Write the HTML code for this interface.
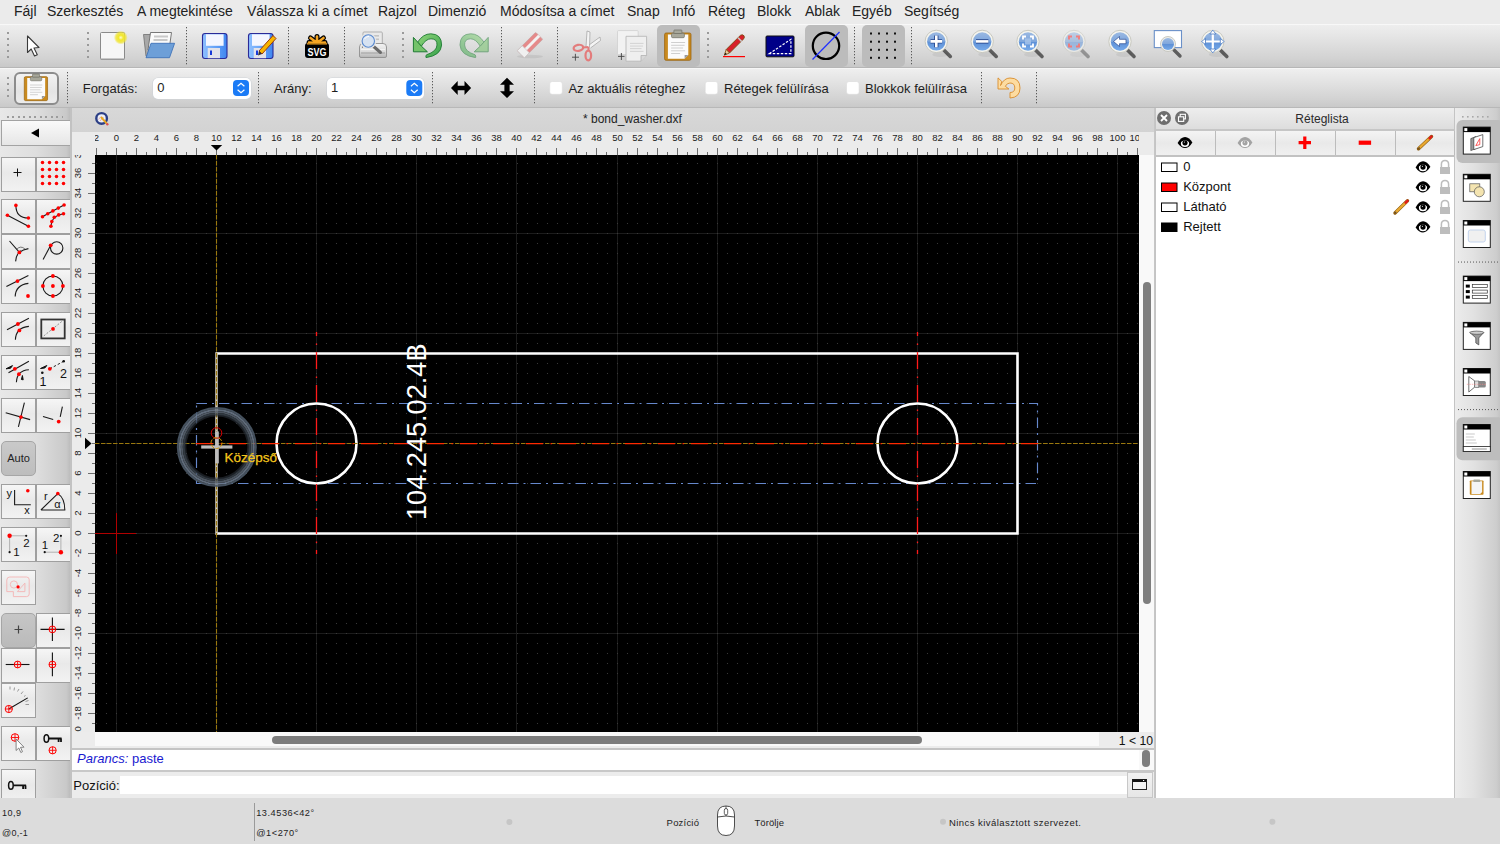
<!DOCTYPE html><html><head><meta charset="utf-8"><style>
*{margin:0;padding:0;box-sizing:border-box}
html,body{width:1500px;height:844px;overflow:hidden;background:#ececec;font-family:"Liberation Sans",sans-serif;color:#1a1a1a}
.a{position:absolute}
.sep{position:absolute;width:1px;border-left:1px dotted #8a8a8a}
.btn{position:absolute;border:1px solid #9a9a9a;background:linear-gradient(#f7f7f7,#e4e4e4)}
.t{position:absolute;white-space:nowrap}
</style></head><body>

<div class="a" style="left:0;top:0;width:1500px;height:24px;background:#ebebeb"></div>
<div class="t" style="left:14px;top:3px;font-size:14px;line-height:17px;color:#222">Fájl</div>
<div class="t" style="left:47px;top:3px;font-size:14px;line-height:17px;color:#222">Szerkesztés</div>
<div class="t" style="left:137px;top:3px;font-size:14px;line-height:17px;color:#222">A megtekintése</div>
<div class="t" style="left:247px;top:3px;font-size:14px;line-height:17px;color:#222">Válassza ki a címet</div>
<div class="t" style="left:378px;top:3px;font-size:14px;line-height:17px;color:#222">Rajzol</div>
<div class="t" style="left:428px;top:3px;font-size:14px;line-height:17px;color:#222">Dimenzió</div>
<div class="t" style="left:500px;top:3px;font-size:14px;line-height:17px;color:#222">Módosítsa a címet</div>
<div class="t" style="left:627px;top:3px;font-size:14px;line-height:17px;color:#222">Snap</div>
<div class="t" style="left:672px;top:3px;font-size:14px;line-height:17px;color:#222">Infó</div>
<div class="t" style="left:708px;top:3px;font-size:14px;line-height:17px;color:#222">Réteg</div>
<div class="t" style="left:757px;top:3px;font-size:14px;line-height:17px;color:#222">Blokk</div>
<div class="t" style="left:805px;top:3px;font-size:14px;line-height:17px;color:#222">Ablak</div>
<div class="t" style="left:852px;top:3px;font-size:14px;line-height:17px;color:#222">Egyéb</div>
<div class="t" style="left:904px;top:3px;font-size:14px;line-height:17px;color:#222">Segítség</div>
<div class="a" style="left:0;top:24px;width:1500px;height:44px;background:linear-gradient(#eeeeee,#e6e6e6 25%,#d2d2d2 80%,#c8c8c8);border-top:1px solid #f8f8f8;border-bottom:1px solid #b6b6b6"></div>
<div class="a" style="left:0;top:68px;width:1500px;height:40px;background:linear-gradient(#efefef,#e6e6e6 25%,#d2d2d2 80%,#c9c9c9);border-top:1px solid #f6f6f6;border-bottom:1px solid #b8b8b8"></div>
<svg class="a" style="left:0;top:0" width="1500" height="108" viewBox="0 0 1500 108">
<defs><pattern id="vdots" x="0" y="0" width="1" height="3" patternUnits="userSpaceOnUse"><rect width="1" height="1.3" fill="#5a5a5a"/></pattern><linearGradient id="blueg" x1="0" y1="0" x2="0" y2="1"><stop offset="0" stop-color="#9bb9e2"/><stop offset="0.5" stop-color="#7ea6dc"/><stop offset="0.52" stop-color="#5e90d6"/><stop offset="1" stop-color="#76aaea"/></linearGradient><linearGradient id="floppy" x1="0" y1="0" x2="1" y2="0"><stop offset="0" stop-color="#8ec0ff"/><stop offset="1" stop-color="#3f86f0"/></linearGradient><radialGradient id="glow"><stop offset="0" stop-color="#fffbd0"/><stop offset="0.35" stop-color="#f2e82a"/><stop offset="0.7" stop-color="#f0e430" stop-opacity="0.8"/><stop offset="1" stop-color="#f0e430" stop-opacity="0"/></radialGradient><linearGradient id="greeng" x1="0" y1="0" x2="1" y2="1"><stop offset="0" stop-color="#8fd47a"/><stop offset="1" stop-color="#36a24a"/></linearGradient></defs>
<rect x="186" y="26" width="1" height="40" fill="url(#vdots)"/>
<rect x="288" y="26" width="1" height="40" fill="url(#vdots)"/>
<rect x="344" y="26" width="1" height="40" fill="url(#vdots)"/>
<rect x="501" y="26" width="1" height="40" fill="url(#vdots)"/>
<rect x="557" y="26" width="1" height="40" fill="url(#vdots)"/>
<rect x="854" y="26" width="1" height="40" fill="url(#vdots)"/>
<rect x="911" y="26" width="1" height="40" fill="url(#vdots)"/>
<rect x="7" y="32" width="2" height="2" fill="#9a9a9a"/><rect x="7" y="38" width="2" height="2" fill="#9a9a9a"/><rect x="7" y="44" width="2" height="2" fill="#9a9a9a"/><rect x="7" y="50" width="2" height="2" fill="#9a9a9a"/><rect x="7" y="56" width="2" height="2" fill="#9a9a9a"/>
<rect x="87" y="32" width="2" height="2" fill="#9a9a9a"/><rect x="87" y="38" width="2" height="2" fill="#9a9a9a"/><rect x="87" y="44" width="2" height="2" fill="#9a9a9a"/><rect x="87" y="50" width="2" height="2" fill="#9a9a9a"/><rect x="87" y="56" width="2" height="2" fill="#9a9a9a"/>
<rect x="402" y="32" width="2" height="2" fill="#9a9a9a"/><rect x="402" y="38" width="2" height="2" fill="#9a9a9a"/><rect x="402" y="44" width="2" height="2" fill="#9a9a9a"/><rect x="402" y="50" width="2" height="2" fill="#9a9a9a"/><rect x="402" y="56" width="2" height="2" fill="#9a9a9a"/>
<rect x="707" y="32" width="2" height="2" fill="#9a9a9a"/><rect x="707" y="38" width="2" height="2" fill="#9a9a9a"/><rect x="707" y="44" width="2" height="2" fill="#9a9a9a"/><rect x="707" y="50" width="2" height="2" fill="#9a9a9a"/><rect x="707" y="56" width="2" height="2" fill="#9a9a9a"/>
<rect x="67" y="71" width="1" height="34" fill="url(#vdots)"/>
<rect x="258" y="71" width="1" height="34" fill="url(#vdots)"/>
<rect x="432" y="71" width="1" height="34" fill="url(#vdots)"/>
<rect x="534" y="71" width="1" height="34" fill="url(#vdots)"/>
<rect x="981" y="71" width="1" height="34" fill="url(#vdots)"/>
<rect x="1036" y="71" width="1" height="34" fill="url(#vdots)"/>
<rect x="7" y="77" width="2" height="2" fill="#9a9a9a"/><rect x="7" y="83" width="2" height="2" fill="#9a9a9a"/><rect x="7" y="89" width="2" height="2" fill="#9a9a9a"/><rect x="7" y="95" width="2" height="2" fill="#9a9a9a"/>
<rect x="657" y="25" width="43" height="42" rx="5" fill="#bcbcbc"/>
<rect x="805" y="25" width="43" height="42" rx="5" fill="#bcbcbc"/>
<rect x="862" y="25" width="43" height="42" rx="5" fill="#bcbcbc"/>
<path d="M27.5 36L27.5 52.5L31.2 49L34.5 56L37.3 54.7L34 48L39 47.5Z" fill="#fff" stroke="#3a3a3a" stroke-width="1.1" stroke-linejoin="round"/>
<rect x="100.5" y="32.5" width="24" height="27" rx="1" fill="#f6f6f6" stroke="#8a8a8a" stroke-width="1"/>
<rect x="101" y="58.5" width="23" height="1.5" fill="#9a9a9a"/>
<circle cx="120.8" cy="37.6" r="7" fill="url(#glow)"/>
<path d="M143.5 34.5H151L150 56H146Z" fill="#a8a8a8" stroke="#6e6e6e" stroke-width="0.8"/>
<path d="M150.5 32.5H171.5L169 50H148Z" fill="#fafafa" stroke="#6a6a6a" stroke-width="0.9"/>
<rect x="154" y="35.5" width="14" height="2" fill="#c8c8c8"/><rect x="153.5" y="39" width="14" height="2" fill="#c8c8c8"/>
<path d="M151 43.3H174.6L169.5 57.7H146Z" fill="#6d9fd8" stroke="#3f73b8" stroke-width="0.9" stroke-linejoin="round"/>
<rect x="202.5" y="33.5" width="24.5" height="25" rx="2.5" fill="url(#floppy)" stroke="#2a2a98" stroke-width="1.1"/><rect x="206" y="34.3" width="17.6" height="11.5" fill="#f4f6ff"/><rect x="207.7" y="48" width="12.3" height="10.2" fill="#e2e2ea"/><rect x="210" y="50.5" width="2" height="4.5" fill="#1a3ad8"/>
<rect x="248.5" y="33.5" width="24.5" height="25" rx="2.5" fill="url(#floppy)" stroke="#2a2a98" stroke-width="1.1"/><rect x="252" y="34.3" width="17.6" height="11.5" fill="#f4f6ff"/><rect x="253.7" y="48" width="12.3" height="10.2" fill="#e2e2ea"/><rect x="256" y="50.5" width="2" height="4.5" fill="#1a3ad8"/>
<path d="M259 51L273 35.5L276 38.5L262 54Z" fill="#f7b500" stroke="#9a3a10" stroke-width="1"/>
<path d="M259 51L262 54L258 55.5Z" fill="#333"/>
<path d="M317 36.5L317 43M317 43L310.5 38M317 43L323.5 38M317 43L309 42.5M317 43L325 42.5" stroke="#000" stroke-width="5" stroke-linecap="round"/>
<path d="M317 36.5L317 43M317 43L310.5 38M317 43L323.5 38M317 43L309 42.5M317 43L325 42.5" stroke="#f6a623" stroke-width="2.6" stroke-linecap="round"/>
<rect x="305" y="43" width="24" height="15" rx="3" fill="#000"/>
<rect x="307" y="43.2" width="20" height="1.3" fill="#f6a623"/>
<text x="317" y="56" text-anchor="middle" font-family="Liberation Sans" font-weight="bold" font-size="11" fill="#fff" textLength="19" lengthAdjust="spacingAndGlyphs">SVG</text>
<defs><linearGradient id="prg" x1="0" y1="0" x2="0" y2="1"><stop offset="0" stop-color="#f4f4f4"/><stop offset="0.55" stop-color="#dcdcdc"/><stop offset="1" stop-color="#b4b4b4"/></linearGradient></defs>
<rect x="363" y="32" width="19.3" height="15" rx="1" fill="#e9e9e9" stroke="#a8a8a8" stroke-width="0.9"/>
<rect x="366" y="35" width="13" height="1.6" fill="#c4c4c4"/><rect x="366" y="38.5" width="13" height="1.6" fill="#c4c4c4"/>
<path d="M359.5 47Q359.5 43.5 363 43.5H383Q386.5 43.5 386.5 47V56Q386.5 57.5 385 57.5H361Q359.5 57.5 359.5 56Z" fill="url(#prg)" stroke="#8e8e8e" stroke-width="0.9"/>
<path d="M361 49.5H385" stroke="#f8f8f8" stroke-width="0.8"/><rect x="361" y="52.5" width="24" height="1" fill="#a0a0a0"/>
<circle cx="362.5" cy="47" r="0.7" fill="#555"/>
<path d="M372.5 45.5L380.5 52.5" stroke="#6a6a6a" stroke-width="3" stroke-linecap="round"/>
<circle cx="368.3" cy="41" r="7.2" fill="none" stroke="#e6e6e6" stroke-width="1.6"/>
<circle cx="368.3" cy="41" r="6.2" fill="#d6e2f2" stroke="#5a8ad0" stroke-width="1.1"/>
<path d="M364.5 39Q366 36.5 369 36.3" stroke="#fff" stroke-width="1" fill="none"/>
<g transform="" opacity="1"><path d="M417.6 42.2Q423 33.8 430.8 33.8Q441.6 34 441.6 45Q441 55.5 426 57.6Q425.5 55.8 426.5 54.8Q436.8 51.5 437 45Q437.3 38.8 431 38.8Q425.8 38.8 421.2 46.4Z" fill="url(#greeng)" stroke="#1f7a34" stroke-width="0.9" stroke-linejoin="round"/><path d="M413.4 37.4V51.8H427.4L421.5 46.3Z" fill="#74c36a" stroke="#1f7a34" stroke-width="1" stroke-linejoin="round"/></g>
<g transform="translate(901.6 0) scale(-1 1)" opacity="0.55"><path d="M417.6 42.2Q423 33.8 430.8 33.8Q441.6 34 441.6 45Q441 55.5 426 57.6Q425.5 55.8 426.5 54.8Q436.8 51.5 437 45Q437.3 38.8 431 38.8Q425.8 38.8 421.2 46.4Z" fill="url(#greeng)" stroke="#1f7a34" stroke-width="0.9" stroke-linejoin="round"/><path d="M413.4 37.4V51.8H427.4L421.5 46.3Z" fill="#74c36a" stroke="#1f7a34" stroke-width="1" stroke-linejoin="round"/></g>
<ellipse cx="530" cy="56.5" rx="13" ry="1.8" fill="#000" opacity="0.07"/>
<g transform="rotate(-45 530 45)"><rect x="517" y="40" width="26" height="10" rx="1" fill="#e58a8a" stroke="#c9a0a0" stroke-width="0.7"/><rect x="517" y="43.5" width="26" height="3" fill="#f2f2f2"/><rect x="517" y="40" width="7" height="10" fill="#f0f0f0" stroke="#c8c8c8" stroke-width="0.7"/></g>
<path d="M586 47L587 31L590 32L589.5 47M589 45L600 37L600.5 40.5L590.5 48" fill="#f4f4f4" stroke="#a8a8a8" stroke-width="0.8"/>
<ellipse cx="578.4" cy="47.9" rx="4.8" ry="3" fill="none" stroke="#e37c7c" stroke-width="2.2" transform="rotate(-10 578.4 47.9)"/>
<ellipse cx="588.3" cy="55.5" rx="2.8" ry="4.8" fill="none" stroke="#e37c7c" stroke-width="2.2"/>
<path d="M583 47.5L588.5 47M588.5 47L588.5 50.7" stroke="#e37c7c" stroke-width="2"/>
<path d="M572 57.2H579M575.4 53.8V60.7" stroke="#444" stroke-width="0.9"/>
<rect x="617.5" y="30.6" width="20.7" height="24" rx="1" fill="#f2f2f2" stroke="#cfcfcf" stroke-width="0.8"/>
<path d="M626 36.3H646.6V55.5L641 61.2H626Z" fill="#efefef" stroke="#b8b8b8" stroke-width="0.9"/>
<path d="M641 61.2V55.5H646.6" fill="#d8d8d8" stroke="#aaa" stroke-width="0.7"/>
<path d="M630 43.4H643.5M630 46.1H643M630 48.6H641.5M630 51.4H643.5" stroke="#cfcfcf" stroke-width="0.9"/>
<path d="M618 56.4H624.5M621.4 53V60" stroke="#444" stroke-width="0.9"/>
<g transform="translate(664.6 30) scale(1)"><rect x="0" y="3" width="26.4" height="27.3" rx="1.5" fill="#c98a1e" stroke="#9a6410" stroke-width="0.8"/><path d="M3.3 4.5H23.7V25L20 28.7H3.3Z" fill="#fbfbfb"/><path d="M20 28.7V25H23.7Z" fill="#999"/><path d="M6.5 12.5H20.5M6.5 15.3H20M6.5 18H18.5M6.5 20.8H20.5M6.5 23.5H15.5" stroke="#c9c9c9" stroke-width="0.9"/><rect x="6.9" y="3.2" width="12.9" height="4.5" rx="1.2" fill="#a7a79a" stroke="#6e6e64" stroke-width="0.7"/><rect x="9.3" y="0" width="8" height="3.5" rx="0.6" fill="#a7a79a" stroke="#6e6e64" stroke-width="0.7"/></g>
<path d="M726.2 49.5L740.5 35.3Q742.5 34 744 35.8Q745 37.5 743.5 39L729.5 53Z" fill="#d8202a" stroke="#7a4a10" stroke-width="0.9"/>
<path d="M738 37.8L741.8 41.6" stroke="#c8c8c8" stroke-width="1.5"/>
<path d="M726.2 49.5L729.5 53L724.3 55.2Z" fill="#f0d0a0" stroke="#7a4a10" stroke-width="0.8"/><path d="M724.3 55.2L725.3 52.7L726.8 54.1Z" fill="#111"/>
<rect x="723" y="56" width="22" height="1.2" fill="#ff0000"/>
<rect x="766" y="36" width="28" height="20.8" rx="1" fill="#000088" stroke="#111" stroke-width="1"/>
<path d="M769.3 53.7L790.9 39.3V53.7Z" fill="none" stroke="#fff" stroke-width="1.2" stroke-dasharray="2.5 1.5"/>
<circle cx="826" cy="45.8" r="13.2" fill="none" stroke="#000" stroke-width="2.2"/>
<path d="M812.5 59.5L839.5 32" stroke="#2030ff" stroke-width="1.2"/>
<rect x="870" y="32.5" width="2" height="2" fill="#111"/>
<rect x="870" y="40.7" width="2" height="2" fill="#111"/>
<rect x="870" y="48.8" width="2" height="2" fill="#111"/>
<rect x="870" y="56.8" width="2" height="2" fill="#111"/>
<rect x="878" y="32.5" width="2" height="2" fill="#111"/>
<rect x="878" y="40.7" width="2" height="2" fill="#111"/>
<rect x="878" y="48.8" width="2" height="2" fill="#111"/>
<rect x="878" y="56.8" width="2" height="2" fill="#111"/>
<rect x="886" y="32.5" width="2" height="2" fill="#111"/>
<rect x="886" y="40.7" width="2" height="2" fill="#111"/>
<rect x="886" y="48.8" width="2" height="2" fill="#111"/>
<rect x="886" y="56.8" width="2" height="2" fill="#111"/>
<rect x="894" y="32.5" width="2" height="2" fill="#111"/>
<rect x="894" y="40.7" width="2" height="2" fill="#111"/>
<rect x="894" y="48.8" width="2" height="2" fill="#111"/>
<rect x="894" y="56.8" width="2" height="2" fill="#111"/>
<path d="M943.3 49.4L950.3 56.4" stroke="#5e5e5e" stroke-width="3.6" stroke-linecap="round"/><ellipse cx="940.3" cy="54.4" rx="8" ry="2.5" fill="#000" opacity="0.06"/><circle cx="936.3" cy="41.4" r="11.2" fill="#f4f4ee" stroke="#c8c8c0" stroke-width="1"/><circle cx="936.3" cy="41.4" r="9.2" fill="url(#blueg)"/><path d="M930.5 41.4H942.1M936.3 35.6V47.2" stroke="#2a4a90" stroke-width="4.4"/><path d="M930.5 41.4H942.1M936.3 35.6V47.2" stroke="#fff" stroke-width="2.6"/>
<path d="M989.2 49.4L996.2 56.4" stroke="#5e5e5e" stroke-width="3.6" stroke-linecap="round"/><ellipse cx="986.2" cy="54.4" rx="8" ry="2.5" fill="#000" opacity="0.06"/><circle cx="982.2" cy="41.4" r="11.2" fill="#f4f4ee" stroke="#c8c8c0" stroke-width="1"/><circle cx="982.2" cy="41.4" r="9.2" fill="url(#blueg)"/><path d="M976 41.4H988.4" stroke="#2a4a90" stroke-width="4.4"/><path d="M976 41.4H988.4" stroke="#fff" stroke-width="2.6"/>
<path d="M1035 49.5L1042 56.5" stroke="#5e5e5e" stroke-width="3.6" stroke-linecap="round"/><ellipse cx="1032" cy="54.5" rx="8" ry="2.5" fill="#000" opacity="0.06"/><circle cx="1028" cy="41.5" r="11.2" fill="#f4f4ee" stroke="#c8c8c0" stroke-width="1"/><circle cx="1028" cy="41.5" r="9.2" fill="url(#blueg)"/><path d="M1023 39.5V36.5H1026M1030 36.5H1033V39.5M1033 43.5V46.5H1030M1026 46.5H1023V43.5" fill="none" stroke="#fff" stroke-width="1.8"/><rect x="1025" y="38.5" width="6" height="6" fill="#a8c4ea" opacity="0.8"/>
<g opacity="0.55"><path d="M1081 49.5L1088 56.5" stroke="#5e5e5e" stroke-width="3.6" stroke-linecap="round"/><ellipse cx="1078" cy="54.5" rx="8" ry="2.5" fill="#000" opacity="0.06"/><circle cx="1074" cy="41.5" r="11.2" fill="#f4f4ee" stroke="#c8c8c0" stroke-width="1"/><circle cx="1074" cy="41.5" r="9.2" fill="url(#blueg)"/><path d="M1069 39.5V36.5H1072M1076 36.5H1079V39.5M1079 43.5V46.5H1076M1072 46.5H1069V43.5" fill="none" stroke="#ff2a2a" stroke-width="1.9"/></g>
<path d="M1127 49.5L1134 56.5" stroke="#5e5e5e" stroke-width="3.6" stroke-linecap="round"/><ellipse cx="1124" cy="54.5" rx="8" ry="2.5" fill="#000" opacity="0.06"/><circle cx="1120" cy="41.5" r="11.2" fill="#f4f4ee" stroke="#c8c8c0" stroke-width="1"/><circle cx="1120" cy="41.5" r="9.2" fill="url(#blueg)"/><path d="M1113.5 41.5L1119.5 36.5V39.3H1126V43.7H1119.5V46.5Z" fill="#fff" stroke="#2a4a90" stroke-width="0.7"/>
<rect x="1154.3" y="30.6" width="27.2" height="17" fill="#fff" stroke="#6a90c8" stroke-width="1.1"/>
<path d="M1174 50L1180 56" stroke="#5e5e5e" stroke-width="3.4" stroke-linecap="round"/>
<circle cx="1168" cy="44" r="7.5" fill="#eeeeea" stroke="#c4c4bc" stroke-width="0.9"/><circle cx="1168" cy="44" r="6" fill="url(#blueg)"/>
<path d="M1219.8 49.5L1226.8 56.5" stroke="#5e5e5e" stroke-width="3.6" stroke-linecap="round"/><ellipse cx="1216.8" cy="54.5" rx="8" ry="2.5" fill="#000" opacity="0.06"/><circle cx="1212.8" cy="41.5" r="11.2" fill="#f4f4ee" stroke="#c8c8c0" stroke-width="1"/><circle cx="1212.8" cy="41.5" r="9.2" fill="url(#blueg)"/><path d="M1212.8 30V53M1201.5 41.5H1224.3" stroke="#fff" stroke-width="2.2"/><path d="M1212.8 30L1209.8 34H1215.8ZM1212.8 53L1209.8 49H1215.8ZM1201.5 41.5L1205.5 38.5V44.5ZM1224.3 41.5L1220.3 38.5V44.5Z" fill="#fff" stroke="#4a7ac0" stroke-width="0.8"/>
</svg>
<div class="a" style="left:14px;top:72px;width:45px;height:33px;border:2px solid #8c8c8c;border-radius:6px;background:linear-gradient(#f2f2f2,#e4e4e4 60%,#ececec)"></div>
<svg class="a" style="left:0;top:68px" width="1100" height="40" viewBox="0 68 1100 40">
<g transform="translate(24.3 74) scale(0.88)"><rect x="0" y="3" width="26.4" height="27.3" rx="1.5" fill="#c98a1e" stroke="#9a6410" stroke-width="0.8"/><path d="M3.3 4.5H23.7V25L20 28.7H3.3Z" fill="#fbfbfb"/><path d="M20 28.7V25H23.7Z" fill="#999"/><path d="M6.5 12.5H20.5M6.5 15.3H20M6.5 18H18.5M6.5 20.8H20.5M6.5 23.5H15.5" stroke="#c9c9c9" stroke-width="0.9"/><rect x="6.9" y="3.2" width="12.9" height="4.5" rx="1.2" fill="#a7a79a" stroke="#6e6e64" stroke-width="0.7"/><rect x="9.3" y="0" width="8" height="3.5" rx="0.6" fill="#a7a79a" stroke="#6e6e64" stroke-width="0.7"/></g>
<path d="M451 88L457.7 81V85.7H464.5V81L471.1 88L464.5 95V90.3H457.7V95Z" fill="#000"/>
<path d="M507 77.8L514 84.8H509.6V91.3H514L507 98L500 91.3H504.4V84.8H500Z" fill="#000"/>
<path d="M1000.5 85.5Q1004 78 1010 78Q1020 78 1020 88Q1020 97.5 1010 98V92.5Q1014.8 92.5 1014.8 88Q1014.8 83 1010 83Q1007 83 1005.3 86.3L1008.9 89H998V77.9L1001.8 81.5Z" fill="#fddca0" stroke="#d88c2c" stroke-width="0.9" stroke-linejoin="round"/>
<rect x="549.7" y="81.5" width="12.6" height="12.8" rx="2.5" fill="#fff" stroke="#dadada" stroke-width="0.6"/>
<rect x="705.2" y="81.5" width="12.6" height="12.8" rx="2.5" fill="#fff" stroke="#dadada" stroke-width="0.6"/>
<rect x="846.5" y="81.5" width="12.6" height="12.8" rx="2.5" fill="#fff" stroke="#dadada" stroke-width="0.6"/>
<rect x="233" y="80" width="16" height="16" rx="4" fill="#1b7bf6"/>
<path d="M237.8 86L241 83L244.2 86M237.8 90L241 93L244.2 90" fill="none" stroke="#fff" stroke-width="1.2"/>
<rect x="406.3" y="80" width="16" height="16" rx="4" fill="#1b7bf6"/>
<path d="M411.1 86L414.3 83L417.5 86M411.1 90L414.3 93L417.5 90" fill="none" stroke="#fff" stroke-width="1.2"/>
</svg>
<div class="a" style="left:153px;top:77.5px;width:98px;height:21px;background:#fff;border-radius:5px;box-shadow:0 0 0 0.6px #cfd3d8"></div>
<div class="a" style="left:327px;top:77.5px;width:97px;height:21px;background:#fff;border-radius:5px;box-shadow:0 0 0 0.6px #cfd3d8"></div>
<svg class="a" style="left:0;top:68px" width="500" height="40" viewBox="0 68 500 40">
<rect x="233" y="80" width="16" height="16" rx="4" fill="#1b7bf6"/>
<path d="M237.6 86.3L241 83.3L244.4 86.3M237.6 89.7L241 92.7L244.4 89.7" fill="none" stroke="#fff" stroke-width="1.2"/>
<rect x="406.3" y="80" width="16" height="16" rx="4" fill="#1b7bf6"/>
<path d="M410.90000000000003 86.3L414.3 83.3L417.7 86.3M410.90000000000003 89.7L414.3 92.7L417.7 89.7" fill="none" stroke="#fff" stroke-width="1.2"/>
</svg>
<div class="t" style="left:82.7px;top:80.5px;font-size:13px;line-height:16px;color:#1e1e1e">Forgatás:</div>
<div class="t" style="left:274px;top:80.5px;font-size:13px;line-height:16px;color:#1e1e1e">Arány:</div>
<div class="t" style="left:157.3px;top:79.5px;font-size:13px;line-height:16px;color:#1e1e1e">0</div>
<div class="t" style="left:331px;top:79.5px;font-size:13px;line-height:16px;color:#1e1e1e">1</div>
<div class="t" style="left:568.4px;top:80.5px;font-size:13px;line-height:16px;color:#1e1e1e">Az aktuális réteghez</div>
<div class="t" style="left:724px;top:80.5px;font-size:13px;line-height:16px;color:#1e1e1e">Rétegek felülírása</div>
<div class="t" style="left:865px;top:80.5px;font-size:13px;line-height:16px;color:#1e1e1e">Blokkok felülírása</div>
<div class="a" style="left:0;top:108px;width:72px;height:690px;background:linear-gradient(to right,#e8e8e8 0%,#dedede 50%,#c9c9c9 92%,#bdbdbd 97%,#c8c8c8 100%);overflow:hidden">
<div class="a" style="left:7px;top:8px;width:56px;height:2px;background:repeating-linear-gradient(to right,#9c9c9c 0 2px,transparent 2px 5.5px)"></div>
<div class="a" style="left:1px;top:12px;width:70px;height:26px;border:1px solid #a3a3a3;background:linear-gradient(#fafafa,#e6e6e6)"></div>
<svg class="a" style="left:28px;top:18px" width="14" height="14"><path d="M3 7L11 2.6V11.4Z" fill="#000"/></svg>
<div class="a" style="left:1px;top:49px;width:35px;height:35px;border:1px solid #9f9f9f;background:linear-gradient(#f6f6f6,#e9e9e9 45%,#f2f2f2)"></div>
<svg class="a" style="left:1px;top:49px" width="35" height="35"><path d="M12.5 15.5H20.5M16.5 11.5V19.5" stroke="#111" stroke-width="1"/></svg>
<div class="a" style="left:36px;top:49px;width:35px;height:35px;border:1px solid #9f9f9f;background:linear-gradient(#f6f6f6,#e9e9e9 45%,#f2f2f2)"></div>
<svg class="a" style="left:36px;top:49px" width="35" height="35"><circle cx="6.5" cy="5.4" r="1.75" fill="#ff0000"/><circle cx="6.5" cy="12.4" r="1.75" fill="#ff0000"/><circle cx="6.5" cy="19.4" r="1.75" fill="#ff0000"/><circle cx="6.5" cy="26.4" r="1.75" fill="#ff0000"/><circle cx="13.5" cy="5.4" r="1.75" fill="#ff0000"/><circle cx="13.5" cy="12.4" r="1.75" fill="#ff0000"/><circle cx="13.5" cy="19.4" r="1.75" fill="#ff0000"/><circle cx="13.5" cy="26.4" r="1.75" fill="#ff0000"/><circle cx="20.5" cy="5.4" r="1.75" fill="#ff0000"/><circle cx="20.5" cy="12.4" r="1.75" fill="#ff0000"/><circle cx="20.5" cy="19.4" r="1.75" fill="#ff0000"/><circle cx="20.5" cy="26.4" r="1.75" fill="#ff0000"/><circle cx="27.5" cy="5.4" r="1.75" fill="#ff0000"/><circle cx="27.5" cy="12.4" r="1.75" fill="#ff0000"/><circle cx="27.5" cy="19.4" r="1.75" fill="#ff0000"/><circle cx="27.5" cy="26.4" r="1.75" fill="#ff0000"/></svg>
<div class="a" style="left:1px;top:91px;width:35px;height:35px;border:1px solid #9f9f9f;background:linear-gradient(#f6f6f6,#e9e9e9 45%,#f2f2f2)"></div>
<svg class="a" style="left:1px;top:91px" width="35" height="35"><path d="M6.4 16.2L27.4 27.3M14.9 6.4Q15 19 27.4 19" stroke="#1a1a1a" stroke-width="1.1" fill="none"/><circle cx="6.4" cy="16.2" r="1.8" fill="#ff0000"/><circle cx="27.4" cy="27.3" r="1.8" fill="#ff0000"/><circle cx="14.9" cy="6.4" r="1.8" fill="#ff0000"/><circle cx="27.4" cy="19" r="1.8" fill="#ff0000"/></svg>
<div class="a" style="left:36px;top:91px;width:35px;height:35px;border:1px solid #9f9f9f;background:linear-gradient(#f6f6f6,#e9e9e9 45%,#f2f2f2)"></div>
<svg class="a" style="left:36px;top:91px" width="35" height="35"><path d="M6.5 17.8 L11.7 14.8 L16.9 11.9 L22.3 9.1 L28.1 6" stroke="#1a1a1a" stroke-width="1.1" fill="none"/><path d="M14.9 27.3 L15.8 22.6 L18.3 18.3 L22.7 15.9 L27.5 14.8" stroke="#1a1a1a" stroke-width="1.1" fill="none"/><circle cx="6.5" cy="17.8" r="1.8" fill="#ff0000"/><circle cx="11.7" cy="14.8" r="1.8" fill="#ff0000"/><circle cx="16.9" cy="11.9" r="1.8" fill="#ff0000"/><circle cx="22.3" cy="9.1" r="1.8" fill="#ff0000"/><circle cx="28.1" cy="6" r="1.8" fill="#ff0000"/><circle cx="14.9" cy="27.3" r="1.8" fill="#ff0000"/><circle cx="15.8" cy="22.6" r="1.8" fill="#ff0000"/><circle cx="18.3" cy="18.3" r="1.8" fill="#ff0000"/><circle cx="22.7" cy="15.9" r="1.8" fill="#ff0000"/><circle cx="27.5" cy="14.8" r="1.8" fill="#ff0000"/></svg>
<div class="a" style="left:1px;top:126px;width:35px;height:35px;border:1px solid #9f9f9f;background:linear-gradient(#f6f6f6,#e9e9e9 45%,#f2f2f2)"></div>
<svg class="a" style="left:1px;top:126px" width="35" height="35"><path d="M8.5 7L18.4 18.4M14.6 27.4Q15 21 18.4 18.4Q22 15.5 27.4 14.6" stroke="#1a1a1a" stroke-width="1.1" fill="none"/><path d="M15.5 15.5Q19.5 11 24 15" stroke="#444" stroke-width="0.7" fill="none"/><circle cx="19.8" cy="16.6" r="0.5" fill="#333"/><circle cx="18.4" cy="18.4" r="1.9" fill="#ff0000"/></svg>
<div class="a" style="left:36px;top:126px;width:35px;height:35px;border:1px solid #9f9f9f;background:linear-gradient(#f6f6f6,#e9e9e9 45%,#f2f2f2)"></div>
<svg class="a" style="left:36px;top:126px" width="35" height="35"><circle cx="20.7" cy="13.9" r="6.2" stroke="#1a1a1a" stroke-width="1.1" fill="none"/><path d="M7.1 25.5L14.7 11.3" stroke="#1a1a1a" stroke-width="1.1" fill="none"/><circle cx="14.7" cy="11.3" r="1.9" fill="#ff0000"/></svg>
<div class="a" style="left:1px;top:161px;width:35px;height:35px;border:1px solid #9f9f9f;background:linear-gradient(#f6f6f6,#e9e9e9 45%,#f2f2f2)"></div>
<svg class="a" style="left:1px;top:161px" width="35" height="35"><path d="M5.4 17.5L27.4 6.6M14.2 27.5Q14.6 16 27.4 14.4" stroke="#1a1a1a" stroke-width="1.1" fill="none"/><circle cx="16.5" cy="12.1" r="1.9" fill="#ff0000"/><circle cx="27" cy="27" r="1.9" fill="#ff0000"/></svg>
<div class="a" style="left:36px;top:161px;width:35px;height:35px;border:1px solid #9f9f9f;background:linear-gradient(#f6f6f6,#e9e9e9 45%,#f2f2f2)"></div>
<svg class="a" style="left:36px;top:161px" width="35" height="35"><circle cx="16.9" cy="17" r="10" stroke="#1a1a1a" stroke-width="1.1" fill="none"/><circle cx="16.9" cy="7" r="1.9" fill="#ff0000"/><circle cx="16.9" cy="27" r="1.9" fill="#ff0000"/><circle cx="6.9" cy="17" r="1.9" fill="#ff0000"/><circle cx="26.9" cy="17" r="1.9" fill="#ff0000"/><circle cx="16.9" cy="17" r="1.9" fill="#ff0000"/></svg>
<div class="a" style="left:1px;top:204px;width:35px;height:35px;border:1px solid #9f9f9f;background:linear-gradient(#f6f6f6,#e9e9e9 45%,#f2f2f2)"></div>
<svg class="a" style="left:1px;top:204px" width="35" height="35"><path d="M6 17.7L27.9 6.3M14.4 27.7Q15 15.5 27.9 14.4" stroke="#1a1a1a" stroke-width="1.1" fill="none"/><circle cx="16.9" cy="12" r="1.9" fill="#ff0000"/><circle cx="18.4" cy="18.4" r="1.9" fill="#ff0000"/></svg>
<div class="a" style="left:36px;top:204px;width:35px;height:35px;border:1px solid #9f9f9f;background:linear-gradient(#f6f6f6,#e9e9e9 45%,#f2f2f2)"></div>
<svg class="a" style="left:36px;top:204px" width="35" height="35"><rect x="5.3" y="7.5" width="23.4" height="18.9" fill="none" stroke="#333" stroke-width="1.8"/><path d="M7.8 23.9L27.7 8" stroke="#777" stroke-width="0.8" stroke-dasharray="2 1.5"/><circle cx="17" cy="16.9" r="1.9" fill="#ff0000"/></svg>
<div class="a" style="left:1px;top:247px;width:35px;height:35px;border:1px solid #9f9f9f;background:linear-gradient(#f6f6f6,#e9e9e9 45%,#f2f2f2)"></div>
<svg class="a" style="left:1px;top:247px" width="35" height="35"><path d="M7.5 17.7L27.9 6.3M15.4 27.2Q16 15.5 27.9 14.8" stroke="#1a1a1a" stroke-width="1.1" fill="none"/><path d="M5 13.8L11.5 10.6L9.5 13.3Z" fill="#111" stroke="#111" stroke-width="1"/><path d="M20.4 24.5L21.4 20.5L22.2 24.8Z" fill="#111" stroke="#111" stroke-width="1"/><circle cx="13.9" cy="13.8" r="1.9" fill="#ff0000"/><circle cx="17.9" cy="19.2" r="1.9" fill="#ff0000"/></svg>
<div class="a" style="left:36px;top:247px;width:35px;height:35px;border:1px solid #9f9f9f;background:linear-gradient(#f6f6f6,#e9e9e9 45%,#f2f2f2)"></div>
<svg class="a" style="left:36px;top:247px" width="35" height="35"><path d="M13.8 13.8L27.7 6.3" stroke="#222" stroke-width="1" stroke-dasharray="2.5 2"/><circle cx="27.7" cy="6.3" r="1.3" fill="#111"/><path d="M4.5 13.5L10.8 10.5L8.8 13Z" fill="#111" stroke="#111" stroke-width="1"/><circle cx="6.3" cy="17.7" r="1.3" fill="#111"/><text x="27.5" y="23" font-size="12.5" text-anchor="middle" fill="#111" font-family="Liberation Sans">2</text><text x="7" y="31" font-size="12.5" text-anchor="middle" fill="#111" font-family="Liberation Sans">1</text><circle cx="13.8" cy="13.8" r="1.9" fill="#ff0000"/></svg>
<div class="a" style="left:1px;top:290px;width:35px;height:35px;border:1px solid #9f9f9f;background:linear-gradient(#f6f6f6,#e9e9e9 45%,#f2f2f2)"></div>
<svg class="a" style="left:1px;top:290px" width="35" height="35"><path d="M4.7 14.7L29.1 21.6M23.4 4.7L17.4 28.8" stroke="#1a1a1a" stroke-width="1.1" fill="none" stroke-width="1.2"/><circle cx="19.9" cy="19.1" r="1.9" fill="#ff0000"/></svg>
<div class="a" style="left:36px;top:290px;width:35px;height:35px;border:1px solid #9f9f9f;background:linear-gradient(#f6f6f6,#e9e9e9 45%,#f2f2f2)"></div>
<svg class="a" style="left:36px;top:290px" width="35" height="35"><path d="M7 18.4L17.2 21.6M26.4 8.7L24.2 18.9" stroke="#1a1a1a" stroke-width="1.1" fill="none" stroke-width="1.2"/><circle cx="22.7" cy="23.6" r="1.9" fill="#ff0000"/></svg>
<div class="a" style="left:1px;top:333px;width:35px;height:35px;border:1px solid #a6a6a6;border-radius:5px;background:linear-gradient(#c9c9c9,#bdbdbd)"></div>
<div class="t" style="left:1px;top:344px;width:35px;text-align:center;font-size:11px;line-height:13px;color:#222">Auto</div>
<div class="a" style="left:1px;top:376px;width:35px;height:35px;border:1px solid #9f9f9f;background:linear-gradient(#f6f6f6,#e9e9e9 45%,#f2f2f2)"></div>
<svg class="a" style="left:1px;top:376px" width="35" height="35"><text x="8.3" y="12.5" font-size="11" text-anchor="middle" fill="#111" font-family="Liberation Sans">y</text><path d="M13.6 6V20.7H29.8" stroke="#1a1a1a" stroke-width="1.1" fill="none"/><text x="26" y="29.5" font-size="11" text-anchor="middle" fill="#111" font-family="Liberation Sans">x</text><circle cx="26.8" cy="6.8" r="1.8" fill="#ff0000"/></svg>
<div class="a" style="left:36px;top:376px;width:35px;height:35px;border:1px solid #9f9f9f;background:linear-gradient(#f6f6f6,#e9e9e9 45%,#f2f2f2)"></div>
<svg class="a" style="left:36px;top:376px" width="35" height="35"><path d="M4.9 26H28.8Q28.8 14 21.8 9.6L4.9 26" stroke="#1a1a1a" stroke-width="1.1" fill="none" stroke-width="1.2"/><text x="9.8" y="16" font-size="11" text-anchor="middle" fill="#111" font-family="Liberation Sans">r</text><text x="21.5" y="23.5" font-size="11" text-anchor="middle" fill="#111" font-family="Liberation Sans">α</text><circle cx="21.8" cy="9.6" r="1.8" fill="#ff0000"/></svg>
<div class="a" style="left:1px;top:419px;width:35px;height:35px;border:1px solid #9f9f9f;background:linear-gradient(#f6f6f6,#e9e9e9 45%,#f2f2f2)"></div>
<svg class="a" style="left:1px;top:419px" width="35" height="35"><path d="M8.6 8.8H25.2M8.6 8.8V25.2" fill="none" stroke="#aaa" stroke-width="0.9"/><circle cx="8.6" cy="8.8" r="2.2" fill="#ff0000"/><circle cx="25.2" cy="8.8" r="1.1" fill="#111"/><circle cx="8.6" cy="25.2" r="1.1" fill="#111"/><text x="15.5" y="28.5" font-size="11.5" text-anchor="middle" fill="#111" font-family="Liberation Sans">1</text><text x="25.5" y="20" font-size="11.5" text-anchor="middle" fill="#111" font-family="Liberation Sans">2</text></svg>
<div class="a" style="left:36px;top:419px;width:35px;height:35px;border:1px solid #9f9f9f;background:linear-gradient(#f6f6f6,#e9e9e9 45%,#f2f2f2)"></div>
<svg class="a" style="left:36px;top:419px" width="35" height="35"><path d="M24.9 8.8V25.2H8.7" fill="none" stroke="#aaa" stroke-width="0.9"/><circle cx="24.9" cy="25.2" r="2.2" fill="#ff0000"/><circle cx="24.9" cy="8.8" r="1.1" fill="#111"/><circle cx="8.7" cy="25.2" r="1.1" fill="#111"/><text x="20.3" y="14.5" font-size="11.5" text-anchor="middle" fill="#111" font-family="Liberation Sans">2</text><text x="9" y="21.5" font-size="11.5" text-anchor="middle" fill="#111" font-family="Liberation Sans">1</text></svg>
<div class="a" style="left:1px;top:462px;width:35px;height:35px;border:1px solid #9f9f9f;background:linear-gradient(#f6f6f6,#e9e9e9 45%,#f2f2f2)"></div>
<svg class="a" style="left:1px;top:462px" width="35" height="35"><path d="M5.8 21.6V10Q5.8 7 8.8 7H25.5Q28.2 7 28.2 9.7V24Q28.2 26.6 25.5 26.6H12.4V21.6Z" fill="none" stroke="#f4b4b4" stroke-width="0.9" stroke-linejoin="round"/><circle cx="12.9" cy="14.5" r="3.6" fill="none" stroke="#f4b4b4" stroke-width="0.9"/><path d="M16.4 21.6L23.9 13.1V21.6Z" fill="none" stroke="#f4b4b4" stroke-width="0.9"/><circle cx="17.1" cy="16.9" r="1.6" fill="#ff0000"/></svg>
<div class="a" style="left:1px;top:505px;width:35px;height:35px;border:1px solid #a6a6a6;border-radius:5px;background:linear-gradient(#c6c6c6,#bababa)"></div>
<svg class="a" style="left:1px;top:505px" width="35" height="35"><path d="M13.5 16.5H21.5M17.5 12.5V20.5" stroke="#444" stroke-width="1.2"/></svg>
<div class="a" style="left:36px;top:505px;width:35px;height:35px;border:1px solid #9f9f9f;background:linear-gradient(#f6f6f6,#e9e9e9 45%,#f2f2f2)"></div>
<svg class="a" style="left:36px;top:505px" width="35" height="35"><path d="M4.5 16.4H28.6M16.4 4.5V28.1" stroke="#111" stroke-width="1.1"/><circle cx="16.4" cy="16.4" r="3.4" fill="none" stroke="#ff0000" stroke-width="1"/><path d="M12.999999999999998 16.4H19.799999999999997M16.4 12.999999999999998V19.799999999999997" stroke="#ff0000" stroke-width="0.9"/></svg>
<div class="a" style="left:1px;top:540px;width:35px;height:35px;border:1px solid #9f9f9f;background:linear-gradient(#f6f6f6,#e9e9e9 45%,#f2f2f2)"></div>
<svg class="a" style="left:1px;top:540px" width="35" height="35"><path d="M4.7 16.5H28.5" stroke="#111" stroke-width="1.1"/><circle cx="16.6" cy="16.5" r="3.4" fill="none" stroke="#ff0000" stroke-width="1"/><path d="M13.200000000000001 16.5H20.0M16.6 13.1V19.9" stroke="#ff0000" stroke-width="0.9"/></svg>
<div class="a" style="left:36px;top:540px;width:35px;height:35px;border:1px solid #9f9f9f;background:linear-gradient(#f6f6f6,#e9e9e9 45%,#f2f2f2)"></div>
<svg class="a" style="left:36px;top:540px" width="35" height="35"><path d="M16.4 4.6V28.2" stroke="#111" stroke-width="1.1"/><circle cx="16.4" cy="16.5" r="3.4" fill="none" stroke="#ff0000" stroke-width="1"/><path d="M12.999999999999998 16.5H19.799999999999997M16.4 13.1V19.9" stroke="#ff0000" stroke-width="0.9"/></svg>
<div class="a" style="left:1px;top:575px;width:35px;height:35px;border:1px solid #9f9f9f;background:linear-gradient(#f6f6f6,#e9e9e9 45%,#f2f2f2)"></div>
<svg class="a" style="left:1px;top:575px" width="35" height="35"><path d="M7.8 26L26.7 14.9" stroke="#111" stroke-width="1.1"/><circle cx="7.8" cy="26" r="3.6" fill="none" stroke="#ff0000" stroke-width="1"/><path d="M4.199999999999999 26H11.4M7.8 22.4V29.6" stroke="#ff0000" stroke-width="0.9"/><path d="M9 3.5V6.5M13.5 4.5L13 7.5M18 6L16.5 8.5M22 8.5L20 11M24.5 12.5L23 13.5M27.5 17.5L24.5 18.5M28 21.5H24.5" stroke="#999" stroke-width="1"/></svg>
<div class="a" style="left:1px;top:618px;width:35px;height:35px;border:1px solid #9f9f9f;background:linear-gradient(#f6f6f6,#e9e9e9 45%,#f2f2f2)"></div>
<svg class="a" style="left:1px;top:618px" width="35" height="35"><circle cx="14" cy="11.5" r="3.8" fill="none" stroke="#ff0000" stroke-width="1"/><path d="M10.2 11.5H17.8M14 7.7V15.3" stroke="#ff0000" stroke-width="0.9"/><path d="M15.1 13L15.1 24.5L17.8 22L19.8 26.5L21.5 25.7L19.5 21.3L23 21.2Z" fill="#fff" stroke="#777" stroke-width="0.9" stroke-linejoin="round"/></svg>
<div class="a" style="left:36px;top:618px;width:35px;height:35px;border:1px solid #9f9f9f;background:linear-gradient(#f6f6f6,#e9e9e9 45%,#f2f2f2)"></div>
<svg class="a" style="left:36px;top:618px" width="35" height="35"><ellipse cx="10.4" cy="12.5" rx="2.3" ry="3.8" fill="none" stroke="#111" stroke-width="1.5"/><path d="M12.7 12.5H25.6M22.6 12.5V16.0M25.0 12.5V16.0" stroke="#111" stroke-width="1.8"/><circle cx="16.6" cy="24.3" r="3.6" fill="none" stroke="#ff0000" stroke-width="1"/><path d="M13.000000000000002 24.3H20.200000000000003M16.6 20.7V27.900000000000002" stroke="#ff0000" stroke-width="0.9"/></svg>
<div class="a" style="left:1px;top:661px;width:35px;height:35px;border:1px solid #9f9f9f;background:linear-gradient(#f6f6f6,#e9e9e9 45%,#f2f2f2)"></div>
<svg class="a" style="left:1px;top:661px" width="35" height="35"><ellipse cx="9.9" cy="16.4" rx="2.3" ry="3.8" fill="none" stroke="#111" stroke-width="1.5"/><path d="M12.2 16.4H25.1M22.1 16.4V19.9M24.5 16.4V19.9" stroke="#111" stroke-width="1.8"/></svg>
</div>
<div class="a" style="left:70px;top:108px;width:2px;height:690px;background:#c2c2c2"></div>
<div class="a" style="left:72px;top:108px;width:1083px;height:24px;background:linear-gradient(#d8d8d8,#d3d3d3)"></div>
<div class="t" style="left:583px;top:112px;font-size:12px;line-height:15px;color:#222">* bond_washer.dxf</div>
<svg class="a" style="left:94px;top:110px" width="17" height="17" viewBox="94 110 17 17"><circle cx="101.6" cy="118.4" r="5.3" fill="#eef0f6" stroke="#2c3f86" stroke-width="2.4"/><path d="M98.5 119.5L101 116.5M100 121L103.5 117" stroke="#d88" stroke-width="0.6"/><path d="M101 117L106.8 123.6" stroke="#e8a820" stroke-width="2"/><circle cx="107.3" cy="124.2" r="1.2" fill="#e05050"/></svg>
<div class="a" style="left:72px;top:132px;width:1082px;height:23px;background:#ebebeb"></div>
<div class="a" style="left:72px;top:155px;width:23px;height:577px;background:#ebebeb"></div>
<svg class="a" style="left:95px;top:155px" width="1044" height="577" viewBox="95 155 1044 577">
<defs><pattern id="dots" x="96" y="163" width="10" height="10" patternUnits="userSpaceOnUse"><rect x="0" y="0" width="1" height="1" fill="#3a3a3a"/></pattern><pattern id="dots2" x="467" y="163" width="10" height="10" patternUnits="userSpaceOnUse"><rect x="0" y="0" width="1" height="1" fill="#3a3a3a"/></pattern></defs>
<rect x="95" y="155" width="1044" height="577" fill="#000"/>
<rect x="116" y="155" width="1" height="577" fill="#1c1c1c"/>
<rect x="216" y="155" width="1" height="577" fill="#1c1c1c"/>
<rect x="316" y="155" width="1" height="577" fill="#1c1c1c"/>
<rect x="416" y="155" width="1" height="577" fill="#1c1c1c"/>
<rect x="516" y="155" width="1" height="577" fill="#1c1c1c"/>
<rect x="617" y="155" width="1" height="577" fill="#1c1c1c"/>
<rect x="717" y="155" width="1" height="577" fill="#1c1c1c"/>
<rect x="817" y="155" width="1" height="577" fill="#1c1c1c"/>
<rect x="917" y="155" width="1" height="577" fill="#1c1c1c"/>
<rect x="1017" y="155" width="1" height="577" fill="#1c1c1c"/>
<rect x="1117" y="155" width="1" height="577" fill="#1c1c1c"/>
<rect x="95" y="233" width="1044" height="1" fill="#1c1c1c"/>
<rect x="95" y="333" width="1044" height="1" fill="#1c1c1c"/>
<rect x="95" y="433" width="1044" height="1" fill="#1c1c1c"/>
<rect x="95" y="533" width="1044" height="1" fill="#1c1c1c"/>
<rect x="95" y="633" width="1044" height="1" fill="#1c1c1c"/>
<rect x="95" y="155" width="367" height="577" fill="url(#dots)"/>
<rect x="462" y="155" width="677" height="577" fill="url(#dots2)"/>
<rect x="95" y="533" width="41" height="1" fill="#b00000"/>
<rect x="116" y="513" width="1" height="41" fill="#b00000"/>
<rect x="196.5" y="403.5" width="841" height="80" fill="none" stroke="#6688cc" stroke-width="1.15" stroke-dasharray="10.5 5 2 5"/>
<path d="M216.5 353.5 H1017.5 V533.5 H216.5" fill="none" stroke="#fff" stroke-width="2.6"/>
<rect x="215.2" y="352.2" width="2.6" height="182.6" fill="#cfc8b8"/>
<circle cx="316.5" cy="443.5" r="40" fill="none" stroke="#fff" stroke-width="2.6"/>
<circle cx="917.5" cy="443.5" r="40" fill="none" stroke="#fff" stroke-width="2.6"/>
<line x1="316.5" y1="332" x2="316.5" y2="554" stroke="#ff1a1a" stroke-width="1.3" stroke-dasharray="17 7.5 1.5 7" stroke-dashoffset="13"/>
<line x1="917.5" y1="332" x2="917.5" y2="554" stroke="#ff1a1a" stroke-width="1.3" stroke-dasharray="17 7.5 1.5 7" stroke-dashoffset="13"/>
<line x1="216.5" y1="155" x2="216.5" y2="732" stroke="#9a780e" stroke-width="1.1" stroke-dasharray="4.5 1.5"/>
<line x1="95" y1="443.5" x2="1139" y2="443.5" stroke="#9a780e" stroke-width="1.1" stroke-dasharray="4.5 1.5"/>
<line x1="196" y1="443.5" x2="1038" y2="443.5" stroke="#ff2a00" stroke-width="1.25" stroke-dasharray="17 7.5 1.5 7"/>
<text x="0" y="0" transform="translate(425.8 520) rotate(-90)" fill="#fff" font-family="Liberation Sans" font-size="28" textLength="176.5" lengthAdjust="spacingAndGlyphs">104.245.02.4B</text>
<circle cx="216.8" cy="447" r="39" fill="none" stroke="#4c5a68" stroke-width="2" opacity="0.9"/>
<circle cx="216.8" cy="447" r="37" fill="none" stroke="#6a7888" stroke-width="2" opacity="0.9"/>
<circle cx="216.8" cy="447" r="35" fill="none" stroke="#56616d" stroke-width="2" opacity="0.9"/>
<circle cx="216.8" cy="447" r="33" fill="none" stroke="#3e4852" stroke-width="2" opacity="0.8"/>
<circle cx="216.8" cy="447" r="31.5" fill="none" stroke="#2a3038" stroke-width="2" opacity="0.6"/>
<rect x="201.2" y="445.4" width="31.2" height="3.2" fill="#bdbdbd"/>
<rect x="215.2" y="431.4" width="3.6" height="32" fill="#bdbdbd"/>
<circle cx="216.5" cy="433" r="5.3" fill="none" stroke="#d00000" stroke-width="1"/>
<circle cx="216.5" cy="443" r="5.5" fill="none" stroke="#c89000" stroke-width="1" stroke-dasharray="4 1.5"/>
<text x="224.4" y="461.8" fill="#f6c81c" font-family="Liberation Sans" font-size="13.5" stroke="#f6c81c" stroke-width="0.25">Középső</text>
</svg>
<svg class="a" style="left:95px;top:132px" width="1044" height="23" viewBox="95 132 1044 23">
<g fill="#6e6e6e">
<rect x="96" y="148" width="1" height="7"/>
<rect x="106" y="152" width="1" height="3"/>
<rect x="116" y="148" width="1" height="7"/>
<rect x="126" y="152" width="1" height="3"/>
<rect x="136" y="148" width="1" height="7"/>
<rect x="146" y="152" width="1" height="3"/>
<rect x="156" y="148" width="1" height="7"/>
<rect x="166" y="152" width="1" height="3"/>
<rect x="176" y="148" width="1" height="7"/>
<rect x="186" y="152" width="1" height="3"/>
<rect x="196" y="148" width="1" height="7"/>
<rect x="206" y="152" width="1" height="3"/>
<rect x="216" y="148" width="1" height="7"/>
<rect x="226" y="152" width="1" height="3"/>
<rect x="236" y="148" width="1" height="7"/>
<rect x="246" y="152" width="1" height="3"/>
<rect x="256" y="148" width="1" height="7"/>
<rect x="266" y="152" width="1" height="3"/>
<rect x="276" y="148" width="1" height="7"/>
<rect x="286" y="152" width="1" height="3"/>
<rect x="296" y="148" width="1" height="7"/>
<rect x="306" y="152" width="1" height="3"/>
<rect x="316" y="148" width="1" height="7"/>
<rect x="326" y="152" width="1" height="3"/>
<rect x="336" y="148" width="1" height="7"/>
<rect x="346" y="152" width="1" height="3"/>
<rect x="356" y="148" width="1" height="7"/>
<rect x="366" y="152" width="1" height="3"/>
<rect x="376" y="148" width="1" height="7"/>
<rect x="386" y="152" width="1" height="3"/>
<rect x="396" y="148" width="1" height="7"/>
<rect x="406" y="152" width="1" height="3"/>
<rect x="416" y="148" width="1" height="7"/>
<rect x="426" y="152" width="1" height="3"/>
<rect x="436" y="148" width="1" height="7"/>
<rect x="446" y="152" width="1" height="3"/>
<rect x="456" y="148" width="1" height="7"/>
<rect x="466" y="152" width="1" height="3"/>
<rect x="476" y="148" width="1" height="7"/>
<rect x="486" y="152" width="1" height="3"/>
<rect x="496" y="148" width="1" height="7"/>
<rect x="506" y="152" width="1" height="3"/>
<rect x="516" y="148" width="1" height="7"/>
<rect x="526" y="152" width="1" height="3"/>
<rect x="536" y="148" width="1" height="7"/>
<rect x="546" y="152" width="1" height="3"/>
<rect x="556" y="148" width="1" height="7"/>
<rect x="566" y="152" width="1" height="3"/>
<rect x="576" y="148" width="1" height="7"/>
<rect x="586" y="152" width="1" height="3"/>
<rect x="596" y="148" width="1" height="7"/>
<rect x="606" y="152" width="1" height="3"/>
<rect x="617" y="148" width="1" height="7"/>
<rect x="627" y="152" width="1" height="3"/>
<rect x="637" y="148" width="1" height="7"/>
<rect x="647" y="152" width="1" height="3"/>
<rect x="657" y="148" width="1" height="7"/>
<rect x="667" y="152" width="1" height="3"/>
<rect x="677" y="148" width="1" height="7"/>
<rect x="687" y="152" width="1" height="3"/>
<rect x="697" y="148" width="1" height="7"/>
<rect x="707" y="152" width="1" height="3"/>
<rect x="717" y="148" width="1" height="7"/>
<rect x="727" y="152" width="1" height="3"/>
<rect x="737" y="148" width="1" height="7"/>
<rect x="747" y="152" width="1" height="3"/>
<rect x="757" y="148" width="1" height="7"/>
<rect x="767" y="152" width="1" height="3"/>
<rect x="777" y="148" width="1" height="7"/>
<rect x="787" y="152" width="1" height="3"/>
<rect x="797" y="148" width="1" height="7"/>
<rect x="807" y="152" width="1" height="3"/>
<rect x="817" y="148" width="1" height="7"/>
<rect x="827" y="152" width="1" height="3"/>
<rect x="837" y="148" width="1" height="7"/>
<rect x="847" y="152" width="1" height="3"/>
<rect x="857" y="148" width="1" height="7"/>
<rect x="867" y="152" width="1" height="3"/>
<rect x="877" y="148" width="1" height="7"/>
<rect x="887" y="152" width="1" height="3"/>
<rect x="897" y="148" width="1" height="7"/>
<rect x="907" y="152" width="1" height="3"/>
<rect x="917" y="148" width="1" height="7"/>
<rect x="927" y="152" width="1" height="3"/>
<rect x="937" y="148" width="1" height="7"/>
<rect x="947" y="152" width="1" height="3"/>
<rect x="957" y="148" width="1" height="7"/>
<rect x="967" y="152" width="1" height="3"/>
<rect x="977" y="148" width="1" height="7"/>
<rect x="987" y="152" width="1" height="3"/>
<rect x="997" y="148" width="1" height="7"/>
<rect x="1007" y="152" width="1" height="3"/>
<rect x="1017" y="148" width="1" height="7"/>
<rect x="1027" y="152" width="1" height="3"/>
<rect x="1037" y="148" width="1" height="7"/>
<rect x="1047" y="152" width="1" height="3"/>
<rect x="1057" y="148" width="1" height="7"/>
<rect x="1067" y="152" width="1" height="3"/>
<rect x="1077" y="148" width="1" height="7"/>
<rect x="1087" y="152" width="1" height="3"/>
<rect x="1097" y="148" width="1" height="7"/>
<rect x="1107" y="152" width="1" height="3"/>
<rect x="1117" y="148" width="1" height="7"/>
<rect x="1127" y="152" width="1" height="3"/>
<rect x="1137" y="148" width="1" height="7"/>
</g><g fill="#1c1c1c" font-family="Liberation Sans" font-size="9.5" text-anchor="middle">
<text x="96.5" y="141.2">2</text>
<text x="116.5" y="141.2">0</text>
<text x="136.5" y="141.2">2</text>
<text x="156.5" y="141.2">4</text>
<text x="176.5" y="141.2">6</text>
<text x="196.5" y="141.2">8</text>
<text x="216.5" y="141.2">10</text>
<text x="236.5" y="141.2">12</text>
<text x="256.5" y="141.2">14</text>
<text x="276.5" y="141.2">16</text>
<text x="296.5" y="141.2">18</text>
<text x="316.5" y="141.2">20</text>
<text x="336.5" y="141.2">22</text>
<text x="356.5" y="141.2">24</text>
<text x="376.5" y="141.2">26</text>
<text x="396.5" y="141.2">28</text>
<text x="416.5" y="141.2">30</text>
<text x="436.5" y="141.2">32</text>
<text x="456.5" y="141.2">34</text>
<text x="476.5" y="141.2">36</text>
<text x="496.5" y="141.2">38</text>
<text x="516.5" y="141.2">40</text>
<text x="536.5" y="141.2">42</text>
<text x="556.5" y="141.2">44</text>
<text x="576.5" y="141.2">46</text>
<text x="596.5" y="141.2">48</text>
<text x="617.5" y="141.2">50</text>
<text x="637.5" y="141.2">52</text>
<text x="657.5" y="141.2">54</text>
<text x="677.5" y="141.2">56</text>
<text x="697.5" y="141.2">58</text>
<text x="717.5" y="141.2">60</text>
<text x="737.5" y="141.2">62</text>
<text x="757.5" y="141.2">64</text>
<text x="777.5" y="141.2">66</text>
<text x="797.5" y="141.2">68</text>
<text x="817.5" y="141.2">70</text>
<text x="837.5" y="141.2">72</text>
<text x="857.5" y="141.2">74</text>
<text x="877.5" y="141.2">76</text>
<text x="897.5" y="141.2">78</text>
<text x="917.5" y="141.2">80</text>
<text x="937.5" y="141.2">82</text>
<text x="957.5" y="141.2">84</text>
<text x="977.5" y="141.2">86</text>
<text x="997.5" y="141.2">88</text>
<text x="1017.5" y="141.2">90</text>
<text x="1037.5" y="141.2">92</text>
<text x="1057.5" y="141.2">94</text>
<text x="1077.5" y="141.2">96</text>
<text x="1097.5" y="141.2">98</text>
<text x="1117.5" y="141.2">100</text>
<text x="1137.5" y="141.2">102</text>
</g>
<path d="M210.8 145 H222.2 L216.5 150.6 Z" fill="#000"/>
</svg>
<svg class="a" style="left:72px;top:155px" width="23" height="577" viewBox="72 155 23 577">
<g fill="#6e6e6e">
<rect x="88" y="733" width="7" height="1"/>
<rect x="92" y="723" width="3" height="1"/>
<rect x="88" y="713" width="7" height="1"/>
<rect x="92" y="703" width="3" height="1"/>
<rect x="88" y="693" width="7" height="1"/>
<rect x="92" y="683" width="3" height="1"/>
<rect x="88" y="673" width="7" height="1"/>
<rect x="92" y="663" width="3" height="1"/>
<rect x="88" y="653" width="7" height="1"/>
<rect x="92" y="643" width="3" height="1"/>
<rect x="88" y="633" width="7" height="1"/>
<rect x="92" y="623" width="3" height="1"/>
<rect x="88" y="613" width="7" height="1"/>
<rect x="92" y="603" width="3" height="1"/>
<rect x="88" y="593" width="7" height="1"/>
<rect x="92" y="583" width="3" height="1"/>
<rect x="88" y="573" width="7" height="1"/>
<rect x="92" y="563" width="3" height="1"/>
<rect x="88" y="553" width="7" height="1"/>
<rect x="92" y="543" width="3" height="1"/>
<rect x="88" y="533" width="7" height="1"/>
<rect x="92" y="523" width="3" height="1"/>
<rect x="88" y="513" width="7" height="1"/>
<rect x="92" y="503" width="3" height="1"/>
<rect x="88" y="493" width="7" height="1"/>
<rect x="92" y="483" width="3" height="1"/>
<rect x="88" y="473" width="7" height="1"/>
<rect x="92" y="463" width="3" height="1"/>
<rect x="88" y="453" width="7" height="1"/>
<rect x="92" y="443" width="3" height="1"/>
<rect x="88" y="433" width="7" height="1"/>
<rect x="92" y="423" width="3" height="1"/>
<rect x="88" y="413" width="7" height="1"/>
<rect x="92" y="403" width="3" height="1"/>
<rect x="88" y="393" width="7" height="1"/>
<rect x="92" y="383" width="3" height="1"/>
<rect x="88" y="373" width="7" height="1"/>
<rect x="92" y="363" width="3" height="1"/>
<rect x="88" y="353" width="7" height="1"/>
<rect x="92" y="343" width="3" height="1"/>
<rect x="88" y="333" width="7" height="1"/>
<rect x="92" y="323" width="3" height="1"/>
<rect x="88" y="313" width="7" height="1"/>
<rect x="92" y="303" width="3" height="1"/>
<rect x="88" y="293" width="7" height="1"/>
<rect x="92" y="283" width="3" height="1"/>
<rect x="88" y="273" width="7" height="1"/>
<rect x="92" y="263" width="3" height="1"/>
<rect x="88" y="253" width="7" height="1"/>
<rect x="92" y="243" width="3" height="1"/>
<rect x="88" y="233" width="7" height="1"/>
<rect x="92" y="223" width="3" height="1"/>
<rect x="88" y="213" width="7" height="1"/>
<rect x="92" y="203" width="3" height="1"/>
<rect x="88" y="193" width="7" height="1"/>
<rect x="92" y="183" width="3" height="1"/>
<rect x="88" y="173" width="7" height="1"/>
<rect x="92" y="163" width="3" height="1"/>
<rect x="88" y="153" width="7" height="1"/>
</g><g fill="#1c1c1c" font-family="Liberation Sans" font-size="9.5" text-anchor="middle">
<text x="0" y="0" transform="translate(81.4 733) rotate(-90)">-20</text>
<text x="0" y="0" transform="translate(81.4 713) rotate(-90)">-18</text>
<text x="0" y="0" transform="translate(81.4 693) rotate(-90)">-16</text>
<text x="0" y="0" transform="translate(81.4 673) rotate(-90)">-14</text>
<text x="0" y="0" transform="translate(81.4 653) rotate(-90)">-12</text>
<text x="0" y="0" transform="translate(81.4 633) rotate(-90)">-10</text>
<text x="0" y="0" transform="translate(81.4 613) rotate(-90)">-8</text>
<text x="0" y="0" transform="translate(81.4 593) rotate(-90)">-6</text>
<text x="0" y="0" transform="translate(81.4 573) rotate(-90)">-4</text>
<text x="0" y="0" transform="translate(81.4 553) rotate(-90)">-2</text>
<text x="0" y="0" transform="translate(81.4 533) rotate(-90)">0</text>
<text x="0" y="0" transform="translate(81.4 513) rotate(-90)">2</text>
<text x="0" y="0" transform="translate(81.4 493) rotate(-90)">4</text>
<text x="0" y="0" transform="translate(81.4 473) rotate(-90)">6</text>
<text x="0" y="0" transform="translate(81.4 453) rotate(-90)">8</text>
<text x="0" y="0" transform="translate(81.4 433) rotate(-90)">10</text>
<text x="0" y="0" transform="translate(81.4 413) rotate(-90)">12</text>
<text x="0" y="0" transform="translate(81.4 393) rotate(-90)">14</text>
<text x="0" y="0" transform="translate(81.4 373) rotate(-90)">16</text>
<text x="0" y="0" transform="translate(81.4 353) rotate(-90)">18</text>
<text x="0" y="0" transform="translate(81.4 333) rotate(-90)">20</text>
<text x="0" y="0" transform="translate(81.4 313) rotate(-90)">22</text>
<text x="0" y="0" transform="translate(81.4 293) rotate(-90)">24</text>
<text x="0" y="0" transform="translate(81.4 273) rotate(-90)">26</text>
<text x="0" y="0" transform="translate(81.4 253) rotate(-90)">28</text>
<text x="0" y="0" transform="translate(81.4 233) rotate(-90)">30</text>
<text x="0" y="0" transform="translate(81.4 213) rotate(-90)">32</text>
<text x="0" y="0" transform="translate(81.4 193) rotate(-90)">34</text>
<text x="0" y="0" transform="translate(81.4 173) rotate(-90)">36</text>
<text x="0" y="0" transform="translate(81.4 153) rotate(-90)">38</text>
</g>
<path d="M85 437.7 V449.3 L91.6 443.5 Z" fill="#000"/>
</svg>
<div class="a" style="left:1139px;top:155px;width:15px;height:577px;background:#f9f9f9"></div>
<div class="a" style="left:1143px;top:282px;width:8px;height:322px;background:#7e7e7e;border-radius:4px"></div>
<div class="a" style="left:72px;top:732px;width:1082px;height:17px;background:#ececec"></div>
<div class="a" style="left:95px;top:732px;width:1004px;height:14px;background:#f9f9f9"></div>
<div class="a" style="left:272px;top:736px;width:650px;height:8px;background:#7c7c7c;border-radius:4px"></div>
<div class="t" style="left:1099px;top:734px;width:54px;text-align:right;font-size:12.2px;line-height:15px;color:#111">1 &lt; 10</div>
<div class="a" style="left:72px;top:748px;width:1082px;height:2px;background:#c4c4c4"></div>
<div class="a" style="left:72px;top:750px;width:1082px;height:20px;background:#fff"></div>
<div class="a" style="left:1139px;top:750px;width:15px;height:20px;background:#f9f9f9"></div>
<div class="a" style="left:1142px;top:750px;width:8px;height:16.5px;background:#7e7e7e;border-radius:4px"></div>
<div class="a" style="left:72px;top:770px;width:1082px;height:1.5px;background:#c8c8c8"></div>
<div class="t" style="left:77px;top:751px;font-size:13px;line-height:15px;color:#1a1ad0"><i>Parancs:</i> paste</div>
<div class="a" style="left:72px;top:771.5px;width:1082px;height:26.5px;background:#ececec"></div>
<div class="t" style="left:73.3px;top:778px;font-size:13px;line-height:15px;color:#111">Pozíció:</div>
<div class="a" style="left:120px;top:776px;width:1007px;height:18px;background:#fff"></div>
<div class="a" style="left:1127px;top:772px;width:26px;height:26px;border:1px solid #c8c8c8;background:linear-gradient(#f2f2f2,#e6e6e6)"></div>
<svg class="a" style="left:1131px;top:778px" width="18" height="14"><rect x="1.5" y="1.5" width="14" height="10" fill="#f2f2f2" stroke="#222" stroke-width="1"/><rect x="1.5" y="1.5" width="14" height="2.5" fill="#111"/><rect x="12" y="2" width="1.2" height="1" fill="#fff"/></svg>
<div class="a" style="left:1154px;top:108px;width:2px;height:690px;background:#c6c6c6"></div>
<div class="a" style="left:1155px;top:108px;width:300px;height:690px;background:#fff;border-left:1px solid #c4c4c4;border-right:1px solid #c4c4c4"></div>
<div class="a" style="left:1156px;top:108px;width:298px;height:21px;background:linear-gradient(#eeeeee,#dddddd)"></div>
<div class="a" style="left:1156px;top:129px;width:298px;height:2px;background:#c6c6c6"></div>
<div class="t" style="left:1156px;top:111.5px;width:332px;text-align:center;font-size:12px;line-height:15px;color:#2a2a2a">Réteglista</div>
<div class="a" style="left:1156px;top:131px;width:59.5px;height:24px;background:linear-gradient(#f4f4f4,#e9e9e9 50%,#f0f0f0);border-right:1.5px solid #bcbcbc"></div>
<div class="a" style="left:1215.5px;top:131px;width:60.0px;height:24px;background:linear-gradient(#f4f4f4,#e9e9e9 50%,#f0f0f0);border-right:1.5px solid #bcbcbc"></div>
<div class="a" style="left:1275.5px;top:131px;width:60.0px;height:24px;background:linear-gradient(#f4f4f4,#e9e9e9 50%,#f0f0f0);border-right:1.5px solid #bcbcbc"></div>
<div class="a" style="left:1335.5px;top:131px;width:60.0px;height:24px;background:linear-gradient(#f4f4f4,#e9e9e9 50%,#f0f0f0);border-right:1.5px solid #bcbcbc"></div>
<div class="a" style="left:1395.5px;top:131px;width:59.0px;height:24px;background:linear-gradient(#f4f4f4,#e9e9e9 50%,#f0f0f0);border-right:1.5px solid #bcbcbc"></div>
<div class="a" style="left:1156px;top:155px;width:298px;height:2px;background:#c2c2c2"></div>
<svg class="a" style="left:1155px;top:108px" width="345" height="690" viewBox="1155 108 345 690">
<circle cx="1164" cy="118" r="7" fill="#6e6e6e"/><path d="M1161 115L1167 121M1167 115L1161 121" stroke="#fff" stroke-width="1.9"/>
<circle cx="1182" cy="118" r="7" fill="#6e6e6e"/><rect x="1180.2" y="114.3" width="5.2" height="4.6" fill="none" stroke="#fff" stroke-width="1.1"/><rect x="1178.5" y="116.8" width="5.2" height="4.6" fill="#6e6e6e" stroke="#fff" stroke-width="1.1"/>
<g transform="translate(1185 142.5) scale(1.0)"><path d="M-7.4 0.6Q-4 -5.8 0.2 -5.6Q4.2 -5.4 7.4 0Q4 5.6 0 5.6Q-4 5.6 -7.4 0.6Z" fill="#000"/><ellipse cx="0" cy="0.9" rx="4.1" ry="3.5" fill="#fff"/><circle cx="0" cy="0.3" r="2.6" fill="#000"/><path d="M-4.5 -1.2Q0 -4.8 4.5 -1.2" fill="none" stroke="#000" stroke-width="1.4"/><circle cx="-0.6" cy="-0.5" r="0.55" fill="#fff"/></g>
<g transform="translate(1245 142.5) scale(1.0)"><path d="M-7.4 0.6Q-4 -5.8 0.2 -5.6Q4.2 -5.4 7.4 0Q4 5.6 0 5.6Q-4 5.6 -7.4 0.6Z" fill="#a3a3a3"/><ellipse cx="0" cy="0.9" rx="4.1" ry="3.5" fill="#fff"/><circle cx="0" cy="0.3" r="2.6" fill="#a3a3a3"/><path d="M-4.5 -1.2Q0 -4.8 4.5 -1.2" fill="none" stroke="#a3a3a3" stroke-width="1.4"/><circle cx="-0.6" cy="-0.5" r="0.55" fill="#fff"/></g>
<path d="M1298.6 142.7H1311M1304.8 136.5V148.9" stroke="#f00" stroke-width="3.2"/>
<rect x="1358.7" y="140.6" width="12.4" height="4.2" fill="#f00"/>
<path d="M1418.5 148.8L1431.5 136.5" stroke="#8a5a10" stroke-width="3.4" stroke-linecap="round"/><path d="M1419.1 148.20000000000002L1431.5 136.5" stroke="#e8a830" stroke-width="2.4" stroke-linecap="butt"/><path d="M1429.55 138.345L1431.5 136.5" stroke="#e01a1a" stroke-width="2.4" stroke-linecap="round"/><path d="M1418.5 148.8l1.8 -0.6l-1.2 -1.2z" fill="#444"/>
<rect x="1161.5" y="163" width="15.5" height="8.5" fill="#fff" stroke="#000" stroke-width="1"/>
<g transform="translate(1423 166.8) scale(1.0)"><path d="M-7.4 0.6Q-4 -5.8 0.2 -5.6Q4.2 -5.4 7.4 0Q4 5.6 0 5.6Q-4 5.6 -7.4 0.6Z" fill="#000"/><ellipse cx="0" cy="0.9" rx="4.1" ry="3.5" fill="#fff"/><circle cx="0" cy="0.3" r="2.6" fill="#000"/><path d="M-4.5 -1.2Q0 -4.8 4.5 -1.2" fill="none" stroke="#000" stroke-width="1.4"/><circle cx="-0.6" cy="-0.5" r="0.55" fill="#fff"/></g>
<path d="M1441.4 167.2V164.2Q1441.4 160.39999999999998 1445 160.39999999999998Q1448.6 160.39999999999998 1448.6 164.2V167.2" fill="none" stroke="#bdbdbd" stroke-width="1.5"/><rect x="1440" y="167.0" width="10" height="7" fill="#bdbdbd"/>
<rect x="1161.5" y="183" width="15.5" height="8.5" fill="#f00" stroke="#000" stroke-width="1"/>
<g transform="translate(1423 186.8) scale(1.0)"><path d="M-7.4 0.6Q-4 -5.8 0.2 -5.6Q4.2 -5.4 7.4 0Q4 5.6 0 5.6Q-4 5.6 -7.4 0.6Z" fill="#000"/><ellipse cx="0" cy="0.9" rx="4.1" ry="3.5" fill="#fff"/><circle cx="0" cy="0.3" r="2.6" fill="#000"/><path d="M-4.5 -1.2Q0 -4.8 4.5 -1.2" fill="none" stroke="#000" stroke-width="1.4"/><circle cx="-0.6" cy="-0.5" r="0.55" fill="#fff"/></g>
<path d="M1441.4 187.2V184.2Q1441.4 180.39999999999998 1445 180.39999999999998Q1448.6 180.39999999999998 1448.6 184.2V187.2" fill="none" stroke="#bdbdbd" stroke-width="1.5"/><rect x="1440" y="187.0" width="10" height="7" fill="#bdbdbd"/>
<rect x="1161.5" y="203" width="15.5" height="8.5" fill="#fff" stroke="#000" stroke-width="1"/>
<g transform="translate(1423 206.8) scale(1.0)"><path d="M-7.4 0.6Q-4 -5.8 0.2 -5.6Q4.2 -5.4 7.4 0Q4 5.6 0 5.6Q-4 5.6 -7.4 0.6Z" fill="#000"/><ellipse cx="0" cy="0.9" rx="4.1" ry="3.5" fill="#fff"/><circle cx="0" cy="0.3" r="2.6" fill="#000"/><path d="M-4.5 -1.2Q0 -4.8 4.5 -1.2" fill="none" stroke="#000" stroke-width="1.4"/><circle cx="-0.6" cy="-0.5" r="0.55" fill="#fff"/></g>
<path d="M1441.4 207.2V204.2Q1441.4 200.39999999999998 1445 200.39999999999998Q1448.6 200.39999999999998 1448.6 204.2V207.2" fill="none" stroke="#bdbdbd" stroke-width="1.5"/><rect x="1440" y="207.0" width="10" height="7" fill="#bdbdbd"/>
<rect x="1161.5" y="223" width="15.5" height="8.5" fill="#000" stroke="#000" stroke-width="1"/>
<g transform="translate(1423 226.8) scale(1.0)"><path d="M-7.4 0.6Q-4 -5.8 0.2 -5.6Q4.2 -5.4 7.4 0Q4 5.6 0 5.6Q-4 5.6 -7.4 0.6Z" fill="#000"/><ellipse cx="0" cy="0.9" rx="4.1" ry="3.5" fill="#fff"/><circle cx="0" cy="0.3" r="2.6" fill="#000"/><path d="M-4.5 -1.2Q0 -4.8 4.5 -1.2" fill="none" stroke="#000" stroke-width="1.4"/><circle cx="-0.6" cy="-0.5" r="0.55" fill="#fff"/></g>
<path d="M1441.4 227.2V224.2Q1441.4 220.39999999999998 1445 220.39999999999998Q1448.6 220.39999999999998 1448.6 224.2V227.2" fill="none" stroke="#bdbdbd" stroke-width="1.5"/><rect x="1440" y="227.0" width="10" height="7" fill="#bdbdbd"/>
<path d="M1395 213L1407.5 200.8" stroke="#8a5a10" stroke-width="3.4" stroke-linecap="round"/><path d="M1395.6 212.4L1407.5 200.8" stroke="#e8a830" stroke-width="2.4" stroke-linecap="butt"/><path d="M1405.625 202.63L1407.5 200.8" stroke="#e01a1a" stroke-width="2.4" stroke-linecap="round"/><path d="M1395 213l1.8 -0.6l-1.2 -1.2z" fill="#444"/>
</svg>
<div class="t" style="left:1183.2px;top:158.5px;font-size:13px;line-height:16px;color:#111">0</div>
<div class="t" style="left:1183.2px;top:178.5px;font-size:13px;line-height:16px;color:#111">Központ</div>
<div class="t" style="left:1183.2px;top:198.5px;font-size:13px;line-height:16px;color:#111">Látható</div>
<div class="t" style="left:1183.2px;top:218.5px;font-size:13px;line-height:16px;color:#111">Rejtett</div>
<div class="a" style="left:1455px;top:108px;width:45px;height:690px;background:linear-gradient(to right,#ececec,#e2e2e2 40%,#cdcdcd 92%,#c4c4c4)"></div>
<svg class="a" style="left:1455px;top:108px" width="45" height="690" viewBox="1455 108 45 690">
<rect x="1462" y="116" width="1.6" height="1.6" fill="#a8a8a8"/>
<rect x="1467" y="116" width="1.6" height="1.6" fill="#a8a8a8"/>
<rect x="1472" y="116" width="1.6" height="1.6" fill="#a8a8a8"/>
<rect x="1477" y="116" width="1.6" height="1.6" fill="#a8a8a8"/>
<rect x="1482" y="116" width="1.6" height="1.6" fill="#a8a8a8"/>
<rect x="1487" y="116" width="1.6" height="1.6" fill="#a8a8a8"/>
<rect x="1458" y="261.5" width="1" height="1.1" fill="#606060"/>
<rect x="1461" y="261.5" width="1" height="1.1" fill="#606060"/>
<rect x="1464" y="261.5" width="1" height="1.1" fill="#606060"/>
<rect x="1467" y="261.5" width="1" height="1.1" fill="#606060"/>
<rect x="1470" y="261.5" width="1" height="1.1" fill="#606060"/>
<rect x="1473" y="261.5" width="1" height="1.1" fill="#606060"/>
<rect x="1476" y="261.5" width="1" height="1.1" fill="#606060"/>
<rect x="1479" y="261.5" width="1" height="1.1" fill="#606060"/>
<rect x="1482" y="261.5" width="1" height="1.1" fill="#606060"/>
<rect x="1485" y="261.5" width="1" height="1.1" fill="#606060"/>
<rect x="1488" y="261.5" width="1" height="1.1" fill="#606060"/>
<rect x="1491" y="261.5" width="1" height="1.1" fill="#606060"/>
<rect x="1494" y="261.5" width="1" height="1.1" fill="#606060"/>
<rect x="1497" y="261.5" width="1" height="1.1" fill="#606060"/>
<rect x="1458" y="409" width="1" height="1.1" fill="#606060"/>
<rect x="1461" y="409" width="1" height="1.1" fill="#606060"/>
<rect x="1464" y="409" width="1" height="1.1" fill="#606060"/>
<rect x="1467" y="409" width="1" height="1.1" fill="#606060"/>
<rect x="1470" y="409" width="1" height="1.1" fill="#606060"/>
<rect x="1473" y="409" width="1" height="1.1" fill="#606060"/>
<rect x="1476" y="409" width="1" height="1.1" fill="#606060"/>
<rect x="1479" y="409" width="1" height="1.1" fill="#606060"/>
<rect x="1482" y="409" width="1" height="1.1" fill="#606060"/>
<rect x="1485" y="409" width="1" height="1.1" fill="#606060"/>
<rect x="1488" y="409" width="1" height="1.1" fill="#606060"/>
<rect x="1491" y="409" width="1" height="1.1" fill="#606060"/>
<rect x="1494" y="409" width="1" height="1.1" fill="#606060"/>
<rect x="1497" y="409" width="1" height="1.1" fill="#606060"/>
<rect x="1456.5" y="120" width="48" height="43" rx="6" fill="#bdbdbd"/>
<rect x="1456.5" y="417.3" width="48" height="43" rx="6" fill="#bdbdbd"/>
<g transform="translate(1462.8 126.6)"><rect x="0.5" y="0.5" width="27" height="27" fill="#fff" stroke="#222" stroke-width="1"/><rect x="0.5" y="0.5" width="27" height="5" fill="#000"/><rect x="1.5" y="1.5" width="3" height="3" fill="#fff"/><path d="M8 12L13 10V22L8 24Z" fill="#999" stroke="#333" stroke-width="0.6"/><path d="M11 11L20 8V20L11 23Z" fill="#fff" stroke="#333" stroke-width="0.7"/><path d="M13 19L17 12L17 18Z" fill="none" stroke="#f33" stroke-width="0.8"/></g>
<g transform="translate(1462.8 173.8)"><rect x="0.5" y="0.5" width="27" height="27" fill="#fff" stroke="#222" stroke-width="1"/><rect x="0.5" y="0.5" width="27" height="5" fill="#000"/><rect x="1.5" y="1.5" width="3" height="3" fill="#fff"/><rect x="7" y="10" width="10" height="8" fill="#f4e4b0" stroke="#555" stroke-width="0.7"/><circle cx="16.5" cy="18" r="5" fill="#f4e4b0" stroke="#555" stroke-width="0.7"/></g>
<g transform="translate(1462.8 220)"><rect x="0.5" y="0.5" width="27" height="27" fill="#fff" stroke="#222" stroke-width="1"/><rect x="0.5" y="0.5" width="27" height="5" fill="#000"/><rect x="1.5" y="1.5" width="3" height="3" fill="#fff"/><rect x="5.5" y="10" width="17" height="12" rx="2" fill="#f0f0f0" stroke="#bdd0ec" stroke-width="0.9"/></g>
<g transform="translate(1462.8 275.6)"><rect x="0.5" y="0.5" width="27" height="27" fill="#fff" stroke="#222" stroke-width="1"/><rect x="0.5" y="0.5" width="27" height="5" fill="#000"/><rect x="1.5" y="1.5" width="3" height="3" fill="#fff"/><rect x="3" y="9" width="4" height="3" fill="#000"/><rect x="3" y="14.5" width="4" height="3" fill="#000"/><rect x="3" y="20" width="4" height="3" fill="#000"/><rect x="9.5" y="9" width="15" height="3" fill="none" stroke="#333" stroke-width="0.7"/><rect x="9.5" y="14.5" width="15" height="3" fill="none" stroke="#333" stroke-width="0.7"/><rect x="9.5" y="20" width="15" height="3" fill="none" stroke="#333" stroke-width="0.7"/></g>
<g transform="translate(1462.8 321.9)"><rect x="0.5" y="0.5" width="27" height="27" fill="#fff" stroke="#222" stroke-width="1"/><rect x="0.5" y="0.5" width="27" height="5" fill="#000"/><rect x="1.5" y="1.5" width="3" height="3" fill="#fff"/><path d="M7 10.5Q14 8.5 21 10.5L16 16V23L13 21V16Z" fill="#9a9a9a" stroke="#444" stroke-width="0.7"/><ellipse cx="14" cy="10.8" rx="7" ry="1.6" fill="#cfcfcf" stroke="#444" stroke-width="0.6"/></g>
<g transform="translate(1462.8 368)"><rect x="0.5" y="0.5" width="27" height="27" fill="#fff" stroke="#222" stroke-width="1"/><rect x="0.5" y="0.5" width="27" height="5" fill="#000"/><rect x="1.5" y="1.5" width="3" height="3" fill="#fff"/><path d="M6 8.5L12 13V19L6 24Z" fill="#fff" stroke="#333" stroke-width="0.7"/><rect x="12" y="13" width="11" height="6.5" rx="1.5" fill="#888"/><rect x="12" y="13" width="4" height="6.5" fill="#ddd" stroke="#555" stroke-width="0.5"/><path d="M4 16.3H24" stroke="#f88" stroke-width="0.6" stroke-dasharray="1.5 1"/></g>
<g transform="translate(1462.8 424)"><rect x="0.5" y="0.5" width="27" height="27" fill="#fff" stroke="#222" stroke-width="1"/><rect x="0.5" y="0.5" width="27" height="5" fill="#000"/><rect x="1.5" y="1.5" width="3" height="3" fill="#fff"/><path d="M3 10H12M3 13H11M3 16H13M3 19H14" stroke="#bbb" stroke-width="0.8"/><rect x="0.5" y="22.5" width="27" height="5" fill="#fff" stroke="#222" stroke-width="0.8"/><path d="M9 25H24" stroke="#777" stroke-width="0.8"/></g>
<g transform="translate(1462.8 471)"><rect x="0.5" y="0.5" width="27" height="27" fill="#fff" stroke="#222" stroke-width="1"/><rect x="0.5" y="0.5" width="27" height="5" fill="#000"/><rect x="1.5" y="1.5" width="3" height="3" fill="#fff"/><g transform="translate(7 8) scale(0.52)"><rect x="0" y="3" width="26.4" height="27.3" rx="1.5" fill="#c98a1e"/><path d="M3.3 4.5H23.7V25L20 28.7H3.3Z" fill="#f4f4f4"/><rect x="6.9" y="1" width="12.9" height="5" rx="1.2" fill="#a7a79a"/></g></g>
</svg>
<div class="a" style="left:0;top:798px;width:1500px;height:46px;background:#dcdcdc"></div>
<div class="t" style="left:2px;top:807px;font-size:9px;letter-spacing:0.5px;line-height:12px;color:#1c1c1c">10,9</div>
<div class="t" style="left:2px;top:827px;font-size:9px;letter-spacing:0.3px;line-height:12px;color:#1c1c1c">@0,-1</div>
<div class="a" style="left:253.5px;top:802.5px;width:1px;height:38px;background:#9a9a9a"></div>
<div class="t" style="left:256.2px;top:807px;font-size:9.2px;letter-spacing:0.55px;line-height:12px;color:#1c1c1c">13.4536&lt;42°</div>
<div class="t" style="left:256.2px;top:827px;font-size:9.2px;letter-spacing:0.55px;line-height:12px;color:#1c1c1c">@1&lt;270°</div>
<div class="t" style="left:666.6px;top:816.5px;font-size:9.5px;letter-spacing:0.2px;line-height:12px;color:#1c1c1c">Pozíció</div>
<div class="t" style="left:754.4px;top:816.5px;font-size:9.5px;letter-spacing:0.1px;line-height:12px;color:#1c1c1c">Törölje</div>
<div class="t" style="left:949px;top:816.5px;font-size:9.5px;letter-spacing:0.45px;line-height:12px;color:#1c1c1c">Nincs kiválasztott szervezet.</div>
<svg class="a" style="left:0;top:798px" width="1500" height="46" viewBox="0 798 1500 46"><circle cx="509.4" cy="822" r="3" fill="#c6c6c6"/><circle cx="943" cy="821.8" r="3" fill="#c6c6c6"/><circle cx="1272.4" cy="821.8" r="3" fill="#c6c6c6"/><path d="M717.5 815Q717.5 806 726 806Q734.5 806 734.5 815V826Q734.5 835.5 726 835.5Q717.5 835.5 717.5 826Z" fill="#fff" stroke="#3a3a3a" stroke-width="0.9"/><path d="M717.5 817Q726 815 734.5 817" fill="none" stroke="#3a3a3a" stroke-width="0.9"/><path d="M726 806V816" stroke="#3a3a3a" stroke-width="0.8"/><rect x="724.3" y="808.5" width="3.4" height="6.5" rx="1.7" fill="#fff" stroke="#3a3a3a" stroke-width="0.8"/></svg>
</body></html>
